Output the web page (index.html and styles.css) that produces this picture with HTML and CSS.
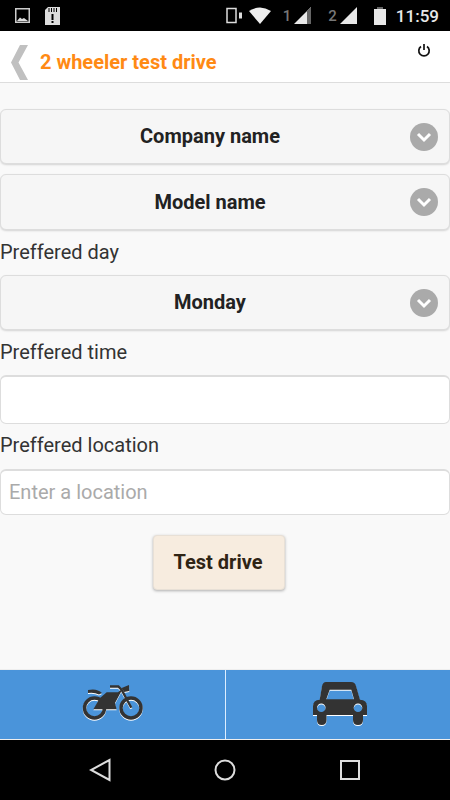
FILE: index.html
```html
<!DOCTYPE html>
<html>
  <head>
    <title>2 wheeler test drive</title>
    <meta charset="UTF-8">
    <link rel="stylesheet" href="styles.css">
  </head>
  <body>
    <div class="statusBar">
      <svg class="stLeft" width="45" height="31" viewBox="0 0 45 31">
        <rect x="15.750" y="8.750" width="13.500" height="13.500" fill="none" stroke="#ccc" stroke-width="1.500"/>
        <path d="M17 21 L20 17.500 L22 19 L24 18 L28 21 Z" fill="#ddd"/>
      </svg>
      <svg class="stSd" width="15" height="18" viewBox="0 0 15 18">
        <path d="M3 0 H15 V18 H0 V3 Z" fill="#ddd"/>
        <path d="M4 1 V5 M6.500 1 V5 M9 1 V5 M11.500 1 V5" stroke="#000" stroke-width="1"/>
        <rect x="6.500" y="7" width="2" height="6" fill="#000"/>
        <rect x="6.500" y="14" width="2" height="2" fill="#000"/>
      </svg>
      <div class="stRight">
        <svg width="18" height="18" viewBox="0 0 18 18">
          <rect x="2" y="1.500" width="9" height="14" fill="none" stroke="#ddd" stroke-width="1.500"/>
          <path d="M14 5.500 H17 V11.500 H14 Z" fill="#ddd"/>
        </svg>
        <svg class="wifi" width="22" height="18" viewBox="0 0 22 18">
          <path d="M0 4 Q11 -3 22 4 L11 17 Z" fill="#eee"/>
        </svg>
        <span class="simNum sim1">1</span>
        <svg class="signal" width="18" height="18" viewBox="0 0 18 18">
          <path d="M1 17 L18 0 V17 Z" fill="#e8e8e8"/>
          <path d="M14 4 L18 0 V17 H14 Z" fill="#666"/>
        </svg>
        <span class="simNum sim2">2</span>
        <svg class="signal" width="18" height="18" viewBox="0 0 18 18">
          <path d="M1 17 L18 0 V17 Z" fill="#e8e8e8"/>
        </svg>
        <svg class="battery" width="12" height="18" viewBox="0 0 12 18">
          <rect x="3" y="0" width="6" height="2" fill="#666"/>
          <rect x="0" y="2" width="12" height="16" fill="#e8e8e8"/>
        </svg>
        <span class="clock">11:59</span>
      </div>
    </div>

    <div class="header">
      <svg class="backIcon" width="17" height="35" viewBox="0 0 17 35">
        <path d="M17 0 H9 L0 17.500 L9 35 H17 L7.500 17.500 Z" fill="#c0c0c0"/>
      </svg>
      <span class="pageTitle">2 wheeler test drive</span>
      <svg class="powerIcon" width="14" height="15" viewBox="0 0 14 15">
        <path d="M4 3.500 A5.200 5.200 0 1 0 10 3.500" fill="none" stroke="#111" stroke-width="1.700"/>
        <path d="M7 1 V7" stroke="#111" stroke-width="1.700"/>
      </svg>
    </div>

    <div class="content">
      <div class="selectBox company">Company name<span class="arrow"><svg width="16" height="12" viewBox="0 0 16 12"><path d="M2 3 L8 9 L14 3" fill="none" stroke="#fff" stroke-width="3"/></svg></span></div>
      <div class="selectBox model">Model name<span class="arrow"><svg width="16" height="12" viewBox="0 0 16 12"><path d="M2 3 L8 9 L14 3" fill="none" stroke="#fff" stroke-width="3"/></svg></span></div>
      <div class="fieldLabel dayLabel">Preffered day</div>
      <div class="selectBox day">Monday<span class="arrow"><svg width="16" height="12" viewBox="0 0 16 12"><path d="M2 3 L8 9 L14 3" fill="none" stroke="#fff" stroke-width="3"/></svg></span></div>
      <div class="fieldLabel timeLabel">Preffered time</div>
      <input class="textBox timeBox" type="text">
      <div class="fieldLabel locLabel">Preffered location</div>
      <input class="textBox locBox" type="text" placeholder="Enter a location">
      <div class="btnRow"><button class="driveBtn">Test drive</button></div>
    </div>

    <div class="tabBar">
      <div class="tab">
        <svg class="bikeIcon" width="60" height="36" viewBox="0 0 60 36">
          <circle cx="11.500" cy="23" r="10" fill="none" stroke="#333" stroke-width="3.500"/>
          <circle cx="48" cy="23" r="10" fill="none" stroke="#333" stroke-width="3.500"/>
          <path d="M5 5 Q14 3 19 8 L16 9.500 Q11 7 5 8 Z" fill="#333"/>
          <path d="M10.300 24.300 L17 13 L23.700 7.300 H35 L40 3.300 L32 18 L33.600 24.300 Z" fill="#333"/>
          <path d="M27 1.500 H35.300 L38.700 5 L48.300 22.700" fill="none" stroke="#333" stroke-width="2.400"/>
          <path d="M38.700 3 L46 0 L46.300 6 L41 7 Z" fill="#333"/>
        </svg>
      </div>
      <div class="tab">
        <svg class="carIcon" width="54" height="43" viewBox="0 0 54 43">
          <path fill-rule="evenodd" d="M13 0 H38 Q42 0 43 4 L47 17.700 Q54 18 54 24 V33 H50 V38 Q50 43 45 43 Q40 43 40 38 V33 H13.500 V38 Q13.500 43 8.750 43 Q4 43 4 38 V33 H0 V24 Q0 18 6.700 17.700 L9 4 Q10 0 13 0 Z M16.700 7.700 L13.300 17.300 H41 L38.300 7.700 Z M8.300 21.400 A4.300 4.300 0 1 0 8.300 30 A4.300 4.300 0 1 0 8.300 21.400 Z M45 21.400 A4.300 4.300 0 1 0 45 30 A4.300 4.300 0 1 0 45 21.400 Z" fill="#333"/>
        </svg>
      </div>
    </div>

    <div class="navBar">
      <svg width="22" height="24" viewBox="0 0 22 24"><path d="M20.500 2 V22 L2 12 Z" fill="none" stroke="#ddd" stroke-width="2"/></svg>
      <svg width="24" height="24" viewBox="0 0 24 24"><circle cx="12" cy="12" r="9.500" fill="none" stroke="#ddd" stroke-width="2"/></svg>
      <svg width="22" height="24" viewBox="0 0 22 24"><rect x="2" y="3" width="18" height="18" fill="none" stroke="#ddd" stroke-width="2"/></svg>
    </div>
  </body>
</html>
```

FILE: styles.css
```css
html, body {
  margin: 0;
  padding: 0;
}
body {
  width: 450px;
  height: 800px;
  overflow: hidden;
  display: flex;
  flex-direction: column;
  background-color: #f9f9f9;
  font-family: Roboto, "Liberation Sans", sans-serif;
  color: #222;
}
.statusBar {
  height: 31px;
  flex: none;
  background-color: #000;
  display: flex;
  align-items: center;
}
.stLeft { flex: none; }
.stSd { flex: none; }
.stRight {
  margin-left: auto;
  display: flex;
  align-items: center;
  padding-right: 11px;
}
.wifi { margin-left: 6px; }
.simNum {
  color: #777;
  font-size: 15px;
  font-weight: 500;
}
.sim1 { margin-left: 12px; }
.sim2 { margin-left: 17px; }
.signal { margin-left: 2px; }
.battery { margin-left: 17px; }
.clock {
  margin-left: 10px;
  color: #e8e8e8;
  font-size: 17px;
  font-weight: 500;
}
.header {
  height: 52px;
  flex: none;
  box-sizing: border-box;
  padding-top: 11px;
  background-color: #fff;
  border-bottom: 1px solid #ddd;
  display: flex;
  align-items: center;
  position: relative;
}
.backIcon {
  margin-left: 11px;
  flex: none;
}
.pageTitle {
  margin-left: 12px;
  color: #ff8a14;
  font-size: 20px;
  font-weight: 700;
}
.powerIcon {
  position: absolute;
  top: 12px;
  left: 417px;
}
.content {
  flex: 1;
  padding-top: 26px;
}
.selectBox {
  box-sizing: border-box;
  display: flex;
  align-items: center;
  justify-content: center;
  border: 1px solid #ddd;
  border-radius: 6px;
  background-color: #f6f6f6;
  box-shadow: 0 1px 2px rgba(0, 0, 0, 0.15);
  font-size: 20px;
  font-weight: 700;
  padding-right: 30px;
  position: relative;
}
.company { height: 55px; margin-bottom: 10px; padding-bottom: 2px; }
.model { height: 56px; }
.day { height: 55px; padding-bottom: 2px; }
.arrow {
  position: absolute;
  right: 11px;
  top: 50%;
  transform: translateY(-50%);
  width: 28px;
  height: 28px;
  border-radius: 50%;
  background-color: #aaa;
  display: flex;
  align-items: center;
  justify-content: center;
}
.fieldLabel {
  font-size: 20px;
  line-height: 22px;
  color: #333;
}
.dayLabel { margin-top: 11px; margin-bottom: 12px; }
.timeLabel { margin-top: 11px; margin-bottom: 12px; }
.locLabel { margin-top: 10px; margin-bottom: 13px; }
.textBox {
  display: block;
  width: 450px;
  box-sizing: border-box;
  border: 1px solid #ddd;
  border-top: 2px solid #ddd;
  border-radius: 6px;
  background-color: #fff;
  padding: 0 8px 2px;
  font-family: Roboto, "Liberation Sans", sans-serif;
  font-size: 20px;
  outline: none;
}
.timeBox { height: 49px; }
.locBox { height: 46px; }
.textBox::placeholder { color: #aaa; opacity: 1; }
.btnRow {
  margin-top: 20px;
  padding-left: 153px;
}
.driveBtn {
  display: block;
  width: 132px;
  height: 55px;
  border: 1px solid #e8e0d6;
  border-radius: 4px;
  background-color: #f7ecdf;
  box-shadow: 0 1px 3px rgba(0, 0, 0, 0.3);
  color: #2f2415;
  font-family: Roboto, "Liberation Sans", sans-serif;
  font-size: 20px;
  font-weight: 700;
  padding: 0 2px 2px 0;
}
.tabBar {
  height: 71px;
  flex: none;
  display: flex;
  background-color: #4a94da;
  border-top: 1px solid #eee;
  border-bottom: 1px solid #eee;
  box-sizing: border-box;
  padding-left: 1px;
  background-clip: padding-box;
}
.tab {
  flex: 1;
  display: flex;
  align-items: center;
  justify-content: center;
}
.tab + .tab { border-left: 1px solid #ddeeff; }
.bikeIcon, .carIcon {
  overflow: visible;
  filter: drop-shadow(0 1px 0 #fff);
}
.bikeIcon { margin-bottom: 3px; }
.carIcon { margin-left: 4px; margin-bottom: 2px; }
.navBar {
  height: 60px;
  flex: none;
  background-color: #000;
  display: flex;
  align-items: center;
  justify-content: center;
  gap: 102px;
}
```
